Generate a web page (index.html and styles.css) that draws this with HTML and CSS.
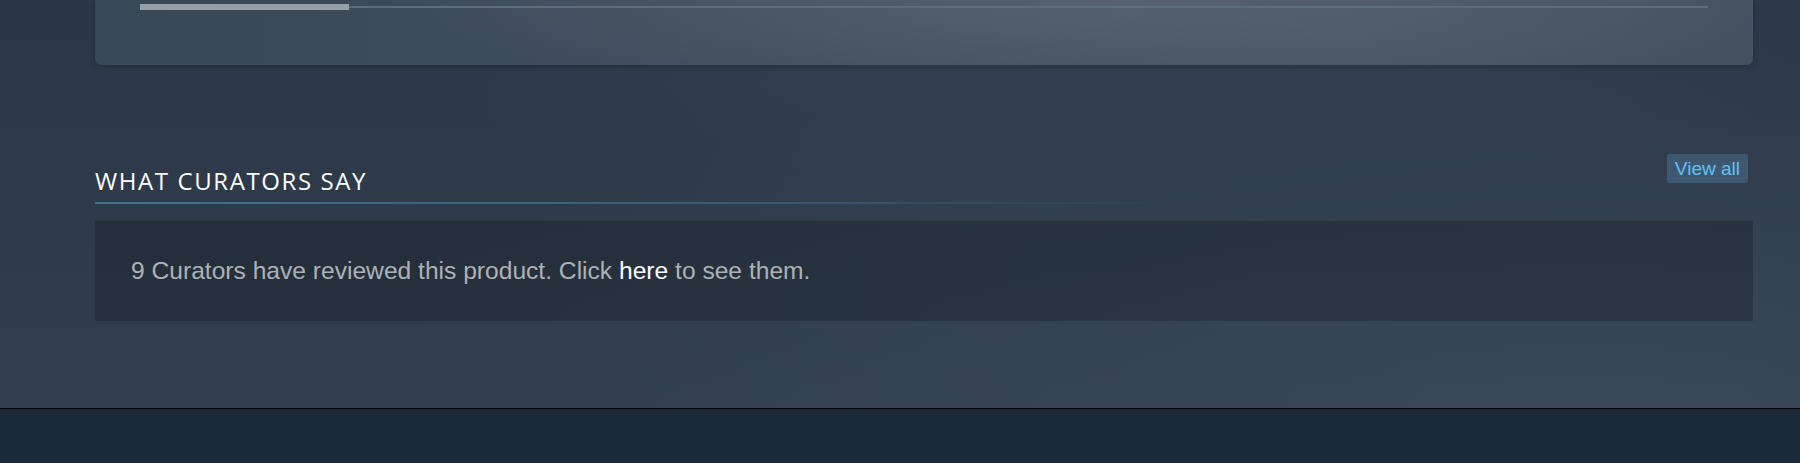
FILE: index.html
```html
<!DOCTYPE html>
<html lang="en">
<head>
  <meta charset="UTF-8">
  <title>What Curators Say</title>
  <link rel="stylesheet" href="styles.css">
</head>
<body>
  <div class="page">
    <div class="media-panel">
      <div class="slider">
        <div class="slider-thumb"></div>
      </div>
    </div>

    <section class="curators">
      <div class="block-head">
        <h2>What Curators Say</h2>
        <a class="btn-view" href="#">View all</a>
      </div>
      <div class="curator-box">
        <p>9 Curators have reviewed this product. Click <a href="#">here</a> to see them.</p>
      </div>
    </section>
  </div>

  <footer class="footer"></footer>
</body>
</html>
```

FILE: styles.css
```css
html, body {
  margin: 0;
  padding: 0;
}

body {
  font-family: "Liberation Sans", Arial, sans-serif;
  background-color: #1b2838;
  height: 463px;
  overflow: hidden;
}

.page {
  box-sizing: border-box;
  height: 409px;
  border-bottom: 1px solid #000;
  background:
    radial-gradient(ellipse 70% 90% at 88% 100%, rgba(70, 84, 100, 0.45), rgba(70, 84, 100, 0) 100%),
    radial-gradient(ellipse 40% 60% at 62% 0%, rgba(70, 82, 98, 0.35), rgba(70, 82, 98, 0) 100%),
    linear-gradient(to bottom, #2c3747 0%, #2f3b4b 60%, #323e4d 100%);
}

.media-panel {
  box-sizing: border-box;
  height: 65px;
  margin: 0 47px 0 95px;
  padding: 4px 45px 0;
  border-radius: 0 0 6px 6px;
  background:
    radial-gradient(ellipse 45% 160% at 62% 0%, rgba(88, 98, 112, 0.9), rgba(88, 98, 112, 0) 100%),
    linear-gradient(to right, #3a4756 0%, #414d5c 40%, #4a5563 75%, #45505e 100%);
  box-shadow: 0 1px 6px rgba(0, 0, 0, 0.25);
}

.slider {
  height: 6px;
  background: linear-gradient(#5f6c7a, #5f6c7a) no-repeat left center / 100% 2px;
}

.slider-thumb {
  width: 209px;
  height: 6px;
  background-color: #969fa8;
}

.curators {
  margin: 89px 47px 0 95px;
}

.block-head {
  display: flex;
  justify-content: space-between;
  align-items: flex-start;
  padding-bottom: 10px;
  background: linear-gradient(to right, #3f7394 0%, rgba(63, 115, 148, 0.6) 35%, rgba(63, 115, 148, 0) 65%) no-repeat left bottom / 100% 2px;
}

.block-head h2 {
  margin: 14px 0 0;
  font-family: "Open Sans", "Noto Sans", sans-serif;
  font-size: 24px;
  font-weight: 400;
  line-height: 26px;
  letter-spacing: 1.6px;
  text-transform: uppercase;
  color: #fff;
}

.btn-view {
  margin-right: 5px;
  padding: 0 8px;
  font-size: 19px;
  line-height: 29px;
  color: #66c0f4;
  background-color: rgba(103, 193, 245, 0.2);
  border-radius: 2px;
  text-decoration: none;
}

.curator-box {
  display: flex;
  align-items: center;
  height: 100px;
  margin-top: 17px;
  padding: 0 36px;
  background-color: rgba(0, 0, 0, 0.2);
}

.curator-box p {
  margin: 0;
  font-size: 24.6px;
  color: #acb2b8;
}

.curator-box a {
  color: #fff;
  text-decoration: none;
}

.footer {
  height: 54px;
  background-color: #1b2838;
}
```
